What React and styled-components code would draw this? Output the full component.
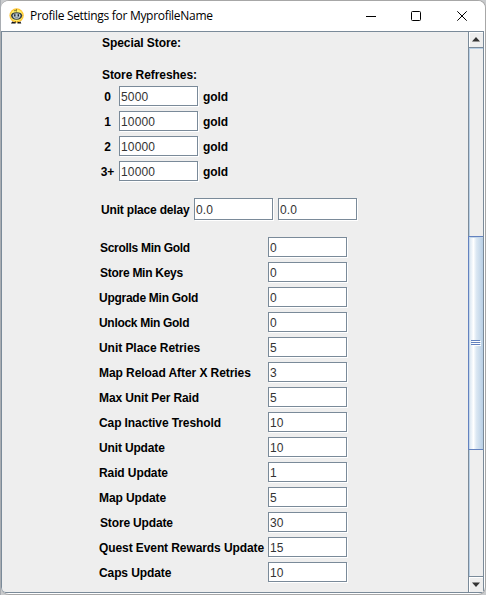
import React from "react";
import styled, { createGlobalStyle } from "styled-components";

const Global = createGlobalStyle`
  * { box-sizing: border-box; }
  html, body { margin: 0; background: #d4d5d7; overflow: hidden; }
`;

const Desktop = styled.div`
  width: 486px;
  height: 595px;
  padding-left: 1px;
  background: linear-gradient(90deg, #a9adb2 0 1px, #c9cbcd 1px);
`;
const Window = styled.div`
  width: 485px;
  height: 595px;
  display: flex;
  flex-direction: column;
  background: #fff;
  border: solid #a7a7a7;
  border-width: 1px 1px 1px 0;
  border-radius: 8px;
  overflow: hidden;
`;
const TitleBar = styled.header`
  height: 30px;
  flex: none;
  display: flex;
  align-items: center;
  padding-left: 7px;
  background: #fff;
`;
const Title = styled.h1`
  flex: 1;
  margin: 0 0 0 5px;
  font: 400 12px/16px "Open Sans", "Noto Sans", sans-serif;
  letter-spacing: ${(p) => p.$track}px;
  color: #000;
  white-space: nowrap;
`;
const WindowButton = styled.button`
  width: 46px;
  height: 30px;
  padding: 0;
  border: 0;
  background: none;
  display: flex;
  align-items: center;
  justify-content: center;
`;
const MinimizeButton = styled(WindowButton)`
  padding-left: 1px;
  padding-bottom: 1px;
`;
const Body = styled.main`
  width: 483px;
  height: 562px;
  display: flex;
  border: solid #7a8a99;
  border-width: 1px 0 1px 1px;
  border-bottom-left-radius: 5px;
  background: #eee;
`;
const Form = styled.div`
  flex: 1;
  display: flex;
  flex-direction: column;
  padding-left: 97px;
  font: 700 12px/15px "Liberation Sans", Arial, sans-serif;
  color: #000;
`;
const Heading = styled.div`
  height: 15px;
  margin: ${(p) => p.$top}px 0 0 3px;
  letter-spacing: -0.07px;
`;
const Rows = styled.div`
  display: flex;
  flex-direction: column;
  gap: 4px;
  margin-top: ${(p) => p.$top}px;
`;
const Row = styled.label`
  display: flex;
  align-items: center;
  height: 21px;
`;
const DelayRow = styled(Row)`
  height: 23px;
  margin-top: 16px;
`;
const Caption = styled.span`
  width: ${(p) => p.$width}px;
  padding-top: 2px;
  padding-left: ${(p) => p.$indent || 0}px;
  letter-spacing: ${(p) => p.$track || 0}px;
  white-space: nowrap;
`;
const Count = styled.span`
  width: 20px;
  padding: 2px 3px 0 0;
  text-align: center;
`;
const Unit = styled.span`
  margin-left: 4px;
  padding-top: 2px;
  letter-spacing: -0.1px;
`;
const Field = styled.input`
  width: 79px;
  height: ${(p) => p.$height || 20}px;
  margin: 0 1px 1px 0;
  padding: 1px 1px 0;
  border: 1px solid #7a8a99;
  border-radius: 0;
  outline: 0;
  background: #fff;
  box-shadow: 1px 1px 0 #fff;
  color: #333;
  font: 400 12px/15px "Liberation Sans", Arial, sans-serif;
  letter-spacing: 0.15px;
  & + & { margin-left: 4px; }
`;
const ScrollBar = styled.div`
  width: 16px;
  display: flex;
  flex-direction: column;
  border: solid #7a8a99;
  border-width: 0 1px;
  background: #eee;
`;
const Arrow = styled.div`
  height: 15px;
  flex: none;
  display: flex;
  align-items: center;
  justify-content: center;
  background: #eee;
  box-shadow: inset 1px 1px 0 #fff;
`;
const Track = styled.div`
  flex: 1;
  display: flex;
  flex-direction: column;
  padding-top: 188px;
  border: solid #7a8a99;
  border-width: 1px 0;
  box-shadow: inset 1px 1px 0 #b8cfe5;
`;
const Thumb = styled.div`
  height: 214px;
  margin-left: -1px;
  display: flex;
  align-items: center;
  justify-content: center;
  border: solid #6382bf;
  border-width: 1px 0 1px 1px;
  background: linear-gradient(90deg, #d5e3f0 0, #fff 32%, #dce8f3 52%, #b8cfe5 100%);
  box-shadow: inset 1px 1px 0 #c5d7ea;
`;

const refreshes = [["0", "5000"], ["1", "10000"], ["2", "10000"], ["3+", "10000"]];

// name, value, letter spacing, indent
const settings = [
  ["Scrolls Min Gold", "0", -0.3, 1],
  ["Store Min Keys", "0", -0.27, 1],
  ["Upgrade Min Gold", "0", -0.27],
  ["Unlock Min Gold", "0", -0.3],
  ["Unit Place Retries", "5", -0.05],
  ["Map Reload After X Retries", "3", -0.07],
  ["Max Unit Per Raid", "5", -0.12],
  ["Cap Inactive Treshold", "10", -0.1],
  ["Unit Update", "10", -0.15],
  ["Raid Update", "1", -0.1],
  ["Map Update", "5", -0.1],
  ["Store Update", "30", -0.15, 1],
  ["Quest Event Rewards Update", "15", -0.09],
  ["Caps Update", "10", -0.1],
];

const AppIcon = () => (
  <svg width="17" height="17" viewBox="0 0 17 17">
    <circle cx="8.6" cy="7.5" r="7.2" fill="#ffc533" />
    <circle cx="8.6" cy="7.3" r="5.9" fill="#fff06a" />
    <path d="M6 3 Q7 1.8 8.2 3 M8.4 1v2.5" fill="none" stroke="#8a7c2b" strokeWidth="1" />
    <path d="M3 7.5 Q3.5 4.4 8.6 4.3 Q13.8 4.4 14.2 7.5 Q14 11.5 8.6 11.8 Q3.3 11.5 3 7.5Z" fill="#343b3e" />
    <path d="M4.6 7.6 Q5.2 5.3 8.6 5.3 Q12.2 5.3 12.6 7.6 Q12 11 8.6 11 Q5 11 4.6 7.6Z" fill="#b9c7cd" />
    <path d="M6.8 6.2v2.3M10.3 6.2v2.3" stroke="#15191c" strokeWidth="1.3" />
    <path d="M7.2 9.7h3" stroke="#708087" strokeWidth=".8" />
    <path d="M3 15.5 L4.2 13.6 L6.2 14.3 L7.8 13.2 L7.6 15.6Z M9.4 15.6 L9.6 13.4 L11.2 14.2 L12.4 13.4 L13.3 15.5Z" fill="#111" />
  </svg>
);

export default function App() {
  return (
    <Desktop>
      <Global />
      <Window>
        <TitleBar>
          <AppIcon />
          <Title $track={-0.3}>Profile Settings for MyprofileName</Title>
          <MinimizeButton aria-label="Minimize">
            <svg width="10" height="10"><path d="M0 5.5H10" stroke="#000" /></svg>
          </MinimizeButton>
          <WindowButton aria-label="Maximize">
            <svg width="10" height="10"><rect x=".5" y=".5" width="9" height="9" rx="1" fill="none" stroke="#000" /></svg>
          </WindowButton>
          <WindowButton aria-label="Close">
            <svg width="10" height="10"><path d="M.3 .3L9.7 9.7M9.7 .3L.3 9.7" stroke="#000" /></svg>
          </WindowButton>
        </TitleBar>
        <Body>
          <Form>
            <Heading $top={4}>Special Store:</Heading>
            <Heading $top={17}>Store Refreshes:</Heading>
            <Rows $top={3}>
              {refreshes.map(([count, value]) => (
                <Row key={count}>
                  <Count>{count}</Count>
                  <Field defaultValue={value} />
                  <Unit>gold</Unit>
                </Row>
              ))}
            </Rows>
            <DelayRow>
              <Caption $width={95} $indent={2} $track={-0.18}>Unit place delay</Caption>
              <Field $height={22} defaultValue="0.0" />
              <Field $height={22} defaultValue="0.0" />
            </DelayRow>
            <Rows $top={16}>
              {settings.map(([name, value, track, indent]) => (
                <Row key={name}>
                  <Caption $width={169} $indent={indent} $track={track}>{name}</Caption>
                  <Field defaultValue={value} />
                </Row>
              ))}
            </Rows>
          </Form>
          <ScrollBar>
            <Arrow><svg width="8" height="5"><path d="M0 4.5L4 0L8 4.5Z" fill="#333" /></svg></Arrow>
            <Track>
              <Thumb>
                <svg width="10" height="6">
                  <path d="M1 1.5H10M1 3.5H10M1 5.5H10" stroke="#fff" />
                  <path d="M0 .5H9M0 2.5H9M0 4.5H9" stroke="#6382bf" />
                </svg>
              </Thumb>
            </Track>
            <Arrow><svg width="8" height="5"><path d="M0 .5L4 5L8 .5Z" fill="#333" /></svg></Arrow>
          </ScrollBar>
        </Body>
      </Window>
    </Desktop>
  );
}
